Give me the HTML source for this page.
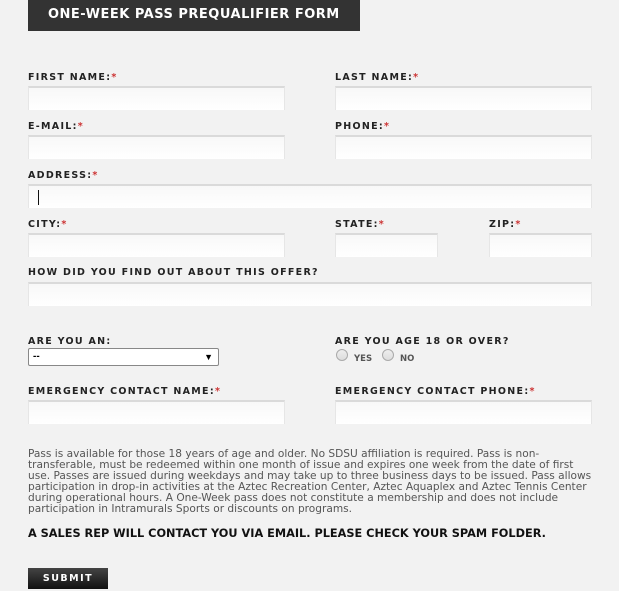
<!DOCTYPE html>
<html><head><meta charset="utf-8"><style>
*{margin:0;padding:0;box-sizing:border-box}
body{width:619px;height:591px;background:#f2f2f2;position:relative;overflow:hidden;font-family:"DejaVu Sans","Liberation Sans",sans-serif}
.hd{position:absolute;left:28px;top:0;width:332px;height:31px;background:#333;color:#fff;font:bold 13px "DejaVu Sans",sans-serif;letter-spacing:0.5px;line-height:29px;padding-left:20px}
.l{position:absolute;font:bold 9.5px "DejaVu Sans",sans-serif;letter-spacing:1.3px;color:#222;line-height:10px}
.l i{color:#c33;font-style:normal}
.in{position:absolute;height:24px;background:linear-gradient(#f8f8f8,#fff);border-top:2px solid #dadada;border-left:1px solid #e6e6e6;border-right:1px solid #e6e6e6}
.sel{position:absolute;left:28px;top:348px;width:191px;height:18px;background:#fff;border:1px solid #888;border-radius:2px;font:bold 10px sans-serif;padding-left:4px;line-height:16px}
.sel span{position:absolute;right:5px;top:0;font-size:9px}
.rad{position:absolute;top:349px;width:12px;height:12px;border-radius:50%;border:1px solid #aaa;background:linear-gradient(#eee,#ddd)}
.rt{position:absolute;top:354px;font:bold 8.5px "DejaVu Sans",sans-serif;color:#555}
.p{position:absolute;left:28px;top:449px;width:580px;font:10.6px/11px "DejaVu Sans",sans-serif;color:#555;white-space:nowrap}
.b{position:absolute;left:28px;top:527px;font:bold 11.3px "DejaVu Sans",sans-serif;color:#111}
.sub{position:absolute;left:28px;top:568px;width:80px;height:21px;background:linear-gradient(#444,#111);color:#fff;font:bold 9.5px "DejaVu Sans",sans-serif;letter-spacing:1.5px;text-align:center;line-height:21px}
</style></head><body>
<div class="hd">ONE-WEEK PASS PREQUALIFIER FORM</div>
<div class="l" style="left:28px;top:73px">FIRST NAME:<i>*</i></div>
<div class="l" style="left:335px;top:73px">LAST NAME:<i>*</i></div>
<div class="in" style="left:28px;top:86px;width:257px"></div>
<div class="in" style="left:335px;top:86px;width:257px"></div>
<div class="l" style="left:28px;top:122px">E-MAIL:<i>*</i></div>
<div class="l" style="left:335px;top:122px">PHONE:<i>*</i></div>
<div class="in" style="left:28px;top:135px;width:257px"></div>
<div class="in" style="left:335px;top:135px;width:257px"></div>
<div class="l" style="left:28px;top:171px">ADDRESS:<i>*</i></div>
<div class="in" style="left:28px;top:184px;width:564px"><div style="position:absolute;left:9px;top:4px;width:1px;height:15px;background:#111"></div></div>
<div class="l" style="left:28px;top:220px">CITY:<i>*</i></div>
<div class="l" style="left:335px;top:220px">STATE:<i>*</i></div>
<div class="l" style="left:489px;top:220px">ZIP:<i>*</i></div>
<div class="in" style="left:28px;top:233px;width:257px"></div>
<div class="in" style="left:335px;top:233px;width:103px"></div>
<div class="in" style="left:489px;top:233px;width:103px"></div>
<div class="l" style="left:28px;top:268px">HOW DID YOU FIND OUT ABOUT THIS OFFER?</div>
<div class="in" style="left:28px;top:282px;width:564px"></div>
<div class="l" style="left:28px;top:337px">ARE YOU AN:</div>
<div class="sel">--<span>&#9660;</span></div>
<div class="l" style="left:335px;top:337px">ARE YOU AGE 18 OR OVER?</div>
<div class="rad" style="left:336px"></div><div class="rt" style="left:354px">YES</div>
<div class="rad" style="left:382px"></div><div class="rt" style="left:400px">NO</div>
<div class="l" style="left:28px;top:387px">EMERGENCY CONTACT NAME:<i>*</i></div>
<div class="l" style="left:335px;top:387px">EMERGENCY CONTACT PHONE:<i>*</i></div>
<div class="in" style="left:28px;top:400px;width:257px"></div>
<div class="in" style="left:335px;top:400px;width:257px"></div>
<div class="p">Pass is available for those 18 years of age and older. No SDSU affiliation is required. Pass is non-<br>transferable, must be redeemed within one month of issue and expires one week from the date of first<br>use. Passes are issued during weekdays and may take up to three business days to be issued. Pass allows<br>participation in drop-in activities at the Aztec Recreation Center, Aztec Aquaplex and Aztec Tennis Center<br>during operational hours. A One-Week pass does not constitute a membership and does not include<br>participation in Intramurals Sports or discounts on programs.</div>
<div class="b">A SALES REP WILL CONTACT YOU VIA EMAIL. PLEASE CHECK YOUR SPAM FOLDER.</div>
<div class="sub">SUBMIT</div>
</body></html>
